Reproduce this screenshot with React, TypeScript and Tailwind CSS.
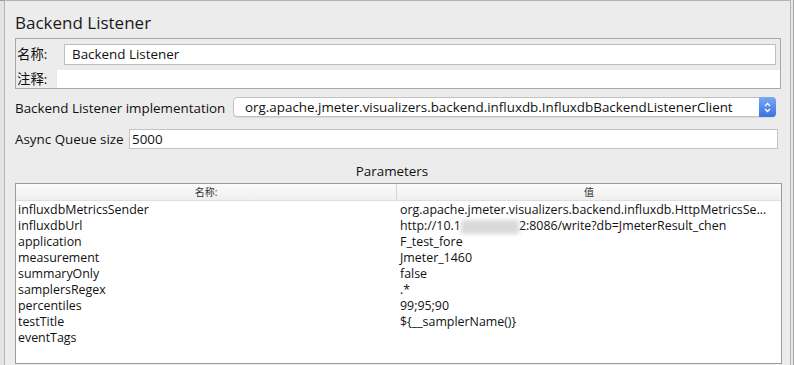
import React from "react"

const params: [string, React.ReactNode][] = [
  ["influxdbMetricsSender", "org.apache.jmeter.visualizers.backend.influxdb.HttpMetricsSe..."],
  [
    "influxdbUrl",
    <>
      http://10.1
      <span className="inline-block w-[58px] h-[14px] align-middle bg-[#d9d9d9] blur-[2px]" />
      2:8086/write?db=JmeterResult_chen
    </>,
  ],
  ["application", "F_test_fore"],
  ["measurement", "Jmeter_1460"],
  ["summaryOnly", "false"],
  ["samplersRegex", ".*"],
  ["percentiles", "99;95;90"],
  ["testTitle", "${__samplerName()}"],
  ["eventTags", ""],
]

export default function App() {
  return (
    <div
      className="flex w-[794px] h-[365px] overflow-hidden bg-[#ececec] text-[#111] text-[13.4px]"
      style={{ fontFamily: '"Open Sans", "Noto Sans CJK SC", sans-serif' }}
    >
      <div className="w-[4px] bg-[#e4e4e4] border-t border-[#9c9c9c]" />
      <div className="flex-1 flex flex-col border-l border-t border-r border-[#b4b4b4] pl-[10px] pr-[9px]">
        {/* Title */}
        <div className="h-[37px] pt-[11px] text-[17px] leading-[22px] text-[#1a1a1a]">Backend Listener</div>

        {/* Name / comment */}
        <div className="h-[51px] border border-[#a9a9a9] flex flex-col">
          <div className="flex items-center h-[31px] pt-[4px] pb-[5px] pr-[4px]">
            <span className="w-[48px] pl-[1px]">名称:</span>
            <div className="flex-1 h-[21px] bg-white border border-[#bdbdbd] pl-[7px] leading-[19px]">Backend Listener</div>
          </div>
          <div className="flex items-center h-[18px]">
            <span className="w-[40px] pl-[1px] pt-[1px]">注释:</span>
            <div className="flex-1 h-[18px] bg-white border-l border-[#e8e8e8]" />
          </div>
        </div>

        {/* Implementation */}
        <div className="flex items-center h-[20px] mt-[8px] pr-[5px]">
          <span className="w-[218px] pt-[2px]">Backend Listener implementation</span>
          <div className="flex-1 h-[20px] flex bg-white border border-[#c2c2c2] rounded-[4px] shadow-[0_1px_1px_rgba(0,0,0,0.08)]">
            <span className="flex-1 pl-[11px] leading-[18px] whitespace-nowrap overflow-hidden">
              org.apache.jmeter.visualizers.backend.influxdb.InfluxdbBackendListenerClient
            </span>
            <div className="w-[17px] -my-px -mr-px rounded-r-[4px] bg-gradient-to-b from-[#7aa8f4] to-[#3b72df] flex items-center justify-center">
              <svg width="7" height="11" viewBox="0 0 7 11" fill="none" stroke="white" strokeWidth="1.3">
                <path d="M1 4 L3.5 1.5 L6 4" />
                <path d="M1 7 L3.5 9.5 L6 7" />
              </svg>
            </div>
          </div>
        </div>

        {/* Async queue */}
        <div className="flex items-center h-[20px] mt-[12px] pr-[3px]">
          <span className="w-[114px] pt-[1px]">Async Queue size</span>
          <div className="flex-1 h-[20px] bg-white border border-[#c4c4c4] pl-[2px] leading-[18px]">5000</div>
        </div>

        {/* Parameters */}
        <div className="text-center h-[34px] pt-[13px] leading-[18px] pr-[12px]">Parameters</div>

        <div className="flex-1 -mr-[1px] mb-[1px] bg-white border border-[#9b9b9b] text-[12.4px]">
          <div className="flex h-[17px] bg-gradient-to-b from-[#fbfbfb] to-[#efefef] border-b border-[#dedede] text-[10px] leading-[16px] text-[#333]">
            <div className="w-[381px] text-center border-r border-[#d6d6d6]">名称:</div>
            <div className="flex-1 text-center">值</div>
          </div>
          <div className="pt-[1px]">
            {params.map(([k, v]) => (
              <div key={k} className="flex h-[16px] leading-[16px] whitespace-nowrap">
                <div className="w-[382px] pl-[2px]">{k}</div>
                <div className="flex-1 pl-[2px]">{v}</div>
              </div>
            ))}
          </div>
        </div>
      </div>
      <div className="w-[3px] bg-[#e6e6e6] border-r border-[#a9a9a9]" />
    </div>
  )
}
